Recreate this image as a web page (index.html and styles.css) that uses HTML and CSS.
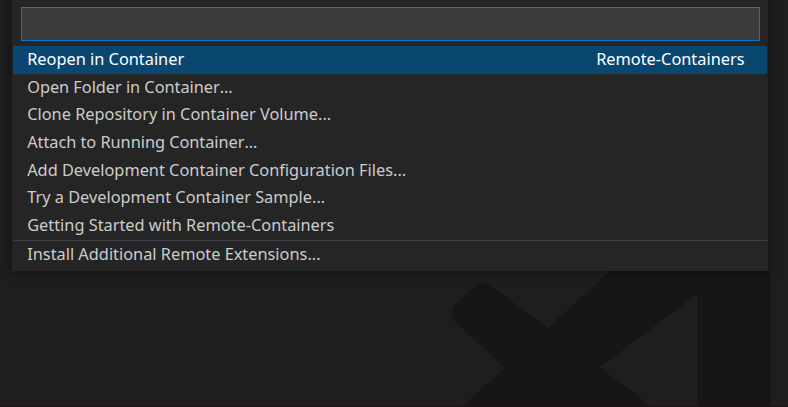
FILE: index.html
```html
<!DOCTYPE html>
<html lang="en">
<head>
<meta charset="utf-8">
<title>Remote-Containers</title>
<link rel="stylesheet" href="styles.css">
</head>
<body>
<svg class="watermark" viewBox="0 0 788 407" aria-hidden="true">
  <path fill-rule="evenodd" d="M611 270L547.5 328.5L494 287.5Q482.500 279.500 474 286.500L456.500 302.500Q447.500 313 456.500 323L505 367.500L461.500 407H771V270ZM697 294V407H652L599.500 367.500Z"/>
</svg>
<main class="quick-input">
  <input class="filter" type="text" aria-label="Filter" autofocus>
  <ul class="list">
    <li class="row selected"><span>Reopen in Container</span><span>Remote-Containers</span></li>
    <li class="row unkerned">Open Folder in Container...</li>
    <li class="row">Clone Repository in Container Volume...</li>
    <li class="row unkerned">Attach to Running Container...</li>
    <li class="row">Add Development Container Configuration Files...</li>
    <li class="row">Try a Development Container Sample...</li>
    <li class="row">Getting Started with Remote-Containers</li>
    <li class="row separated">Install Additional Remote Extensions...</li>
  </ul>
</main>
</body>
</html>
```
FILE: styles.css
```css
* { box-sizing: border-box; }
body {
  margin: 0;
  height: 407px;
  overflow: hidden;
  background: #1e1e1e;
  border-bottom: 1px solid #191516;
  font-family: "Noto Sans", sans-serif;
  font-size: 16.34px;
}
.watermark {
  position: absolute;
  inset: 0;
  width: 788px;
  height: 407px;
  clip-path: inset(0 0 1px);
  fill: #161616;
}
.quick-input {
  position: relative;
  width: 756px;
  height: 271px;
  margin-left: 12px;
  padding: 7px 1px 0;
  background: #252526;
  box-shadow: 0 0 10px 2px rgba(0, 0, 0, .36);
}
.filter {
  display: block;
  width: 739px;
  height: 34px;
  margin: 0 0 5px 8px;
  padding: 0 8px;
  border: 1px solid #007fd4;
  border-radius: 0;
  outline: 0;
  background: #3c3c3c;
  color: #ccc;
  caret-color: transparent;
  font: inherit;
}
.list { margin: 0; padding: 0; list-style: none; }
.row {
  display: flex;
  justify-content: space-between;
  height: 27.65px;
  padding: 0 22.5px 0 14.2px;
  line-height: 27.65px;
  color: #ccc;
  white-space: nowrap;
}
.unkerned { font-kerning: none; letter-spacing: -.035px; }
.selected { background: #094771; color: #fff; }
.separated {
  height: 29px;
  margin-top: .6px;
  border-top: 1px solid #3f3f46;
}
```
